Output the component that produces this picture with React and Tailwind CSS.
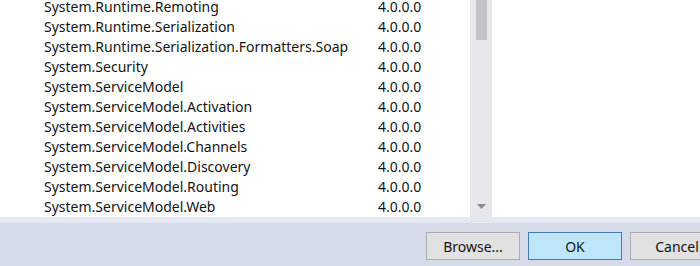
import React from "react";

const rows = [
  "System.Runtime.Remoting",
  "System.Runtime.Serialization",
  "System.Runtime.Serialization.Formatters.Soap",
  "System.Security",
  "System.ServiceModel",
  "System.ServiceModel.Activation",
  "System.ServiceModel.Activities",
  "System.ServiceModel.Channels",
  "System.ServiceModel.Discovery",
  "System.ServiceModel.Routing",
  "System.ServiceModel.Web",
];

export default function App() {
  return (
    <div
      className="w-[700px] h-[266px] overflow-hidden bg-white flex flex-col text-[14px] text-[#141414]"
      style={{ fontFamily: '"Noto Sans", "Open Sans", sans-serif' }}
    >
      <div className="h-[217px] flex shrink-0 bg-white">
        <div className="w-[470px] overflow-hidden">
          <div className="flex flex-col">
            {rows.map((r, i) => (
              <div
                key={r}
                className={
                  i === 0
                    ? "h-[14px] mb-[3px] flex items-center leading-[14px]"
                    : "h-[20px] flex items-center leading-[14px]"
                }
              >
                <span className="pl-[44px] w-[378px] shrink-0">{r}</span>
                <span>4.0.0.0</span>
              </div>
            ))}
          </div>
        </div>
        <div className="w-[22px] bg-[#e8e8ec] flex flex-col items-center">
          <div className="w-[11px] h-[40px] bg-[#c2c3c9]" />
          <div className="flex-1" />
          <svg width="9" height="5" viewBox="0 0 9 5" className="mb-[8px]">
            <polygon points="0,0 9,0 4.5,5" fill="#868999" />
          </svg>
        </div>
        <div className="flex-1 bg-white" />
      </div>
      <div className="h-[6px] bg-[#e6e8f3]" />
      <div className="flex-1 bg-[#d6dbe9] flex items-start pt-[9px] pl-[426px] gap-[8px]">
        <button className="w-[94px] h-[28px] bg-[#e1e1e1] border border-[#adadad] text-[#141414] text-[14px] shrink-0">
          Browse...
        </button>
        <button className="w-[94px] h-[28px] bg-[#bee6fd] border border-[#3c7fb1] text-[#141414] text-[14px] shrink-0">
          OK
        </button>
        <button className="w-[94px] h-[28px] bg-[#e1e1e1] border border-[#adadad] text-[#141414] text-[14px] shrink-0">
          Cancel
        </button>
      </div>
    </div>
  );
}
